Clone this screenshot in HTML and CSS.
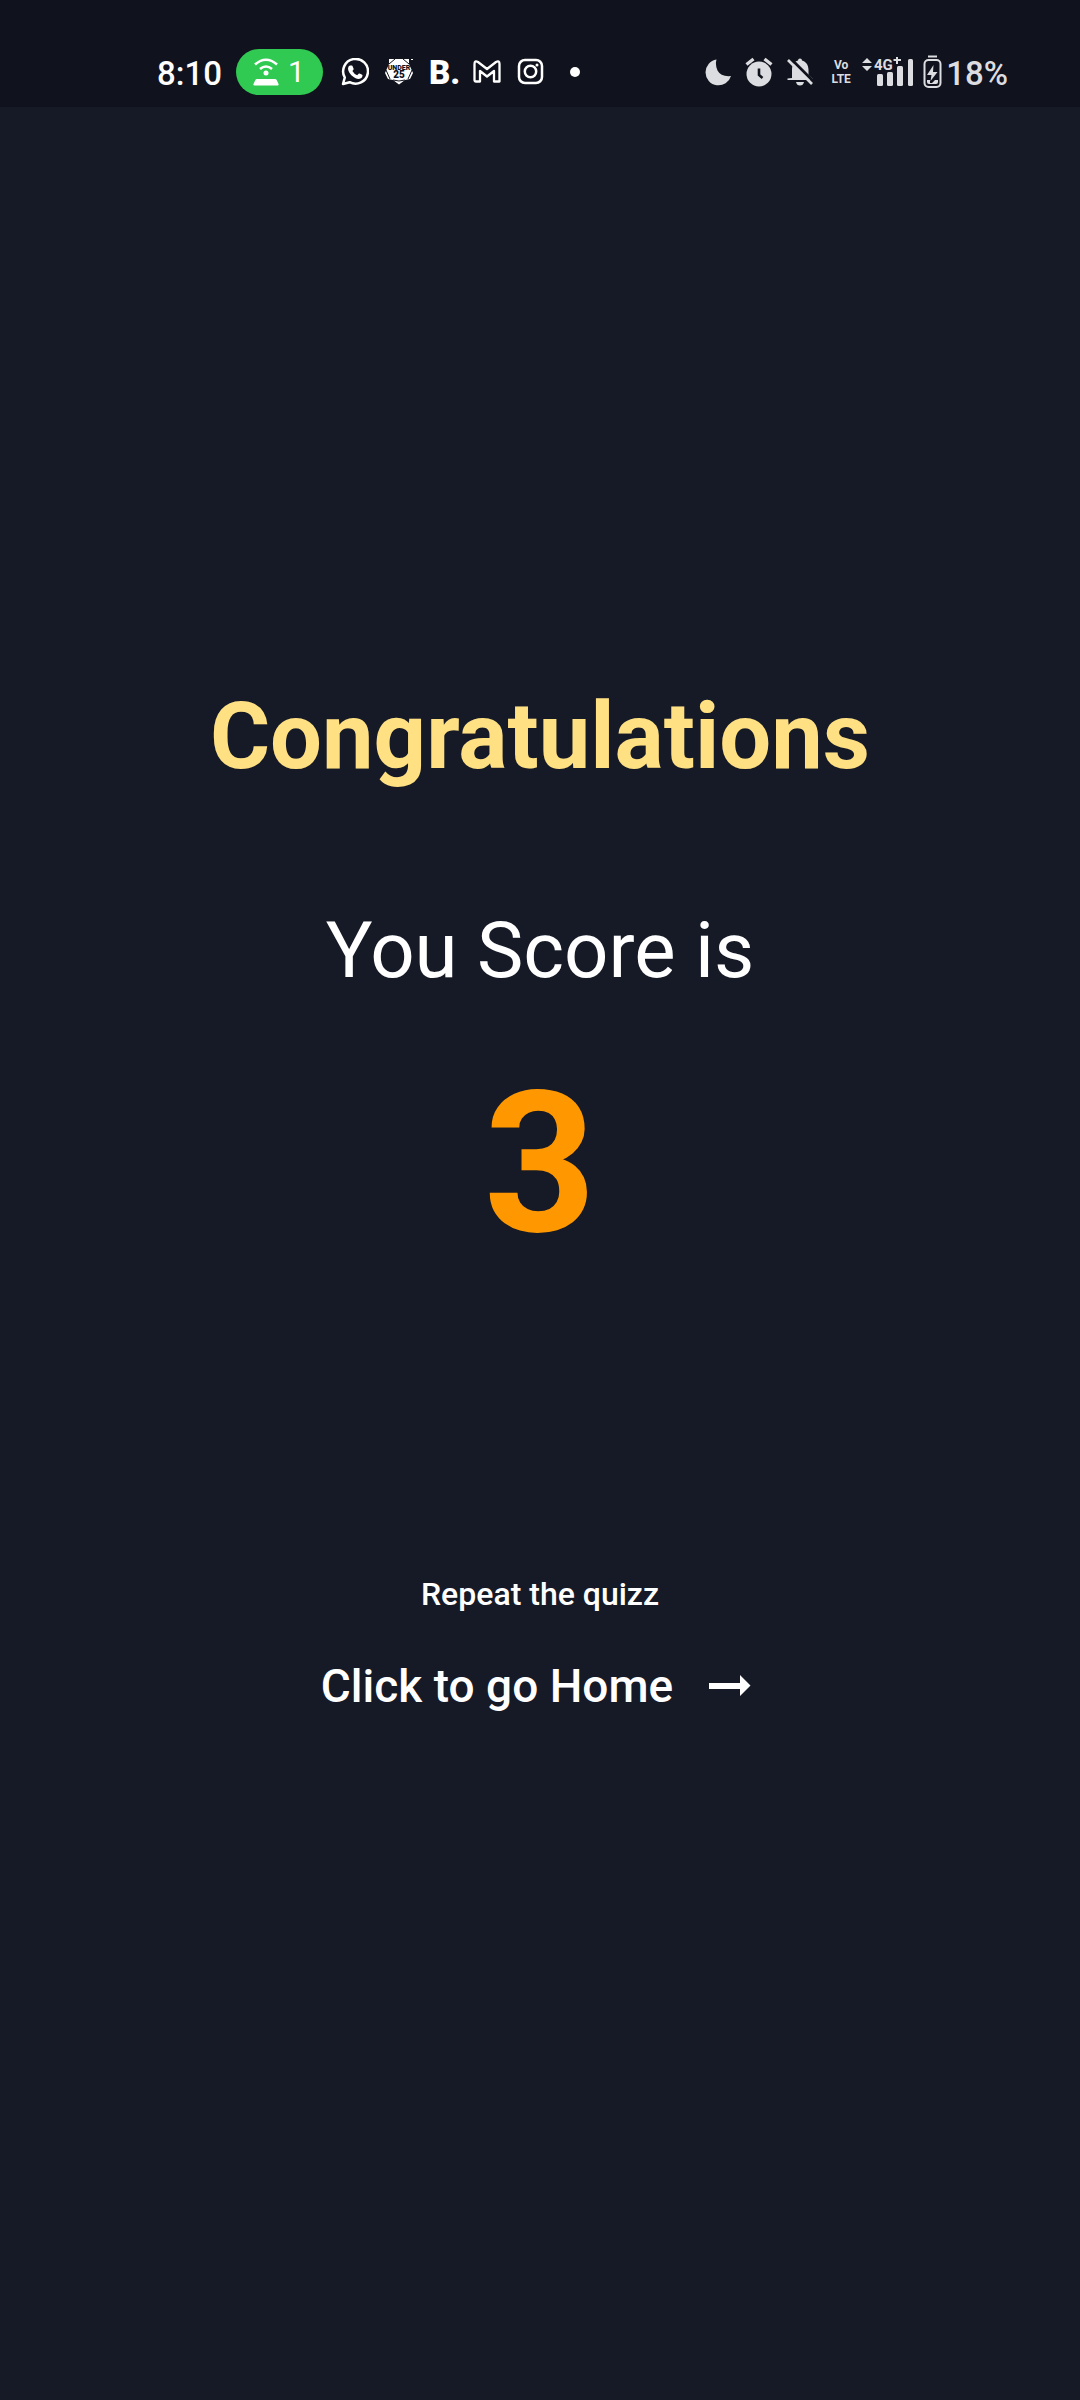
FILE: index.html
```html
<!DOCTYPE html>
<html lang="en">
<head>
<meta charset="utf-8">
<meta name="viewport" content="width=device-width, initial-scale=1">
<title>Quiz result</title>
<link rel="stylesheet" href="styles.css">
</head>
<body>
<header class="status">
  <div class="status-left">
    <span class="clock">8:10</span>
    <span class="hotspot">
      <svg width="28" height="28" viewBox="0 0 28 28" fill="none" stroke="#fff" stroke-width="2.6"><path d="M3 6.500Q14-3 25 6.500M8 11Q14 6 20 11"/><circle cx="14" cy="15" r="2.500" fill="#fff" stroke="none"/><path d="M5 21h18q1.200 0 1.700 1l1.800 4q.6 1.400-1 1.400h-23q-1.600 0-1-1.400l1.800-4q.5-1 1.700-1z" fill="#fff" stroke="none"/></svg>
      <span>1</span>
    </span>
    <div class="notices">
      <svg width="28" height="28" viewBox="0 0 28 28"><path d="M2 26l1.800-6.500A12.400 12.400 0 1 1 8.600 24.200z" fill="none" stroke="#fff" stroke-width="2.500" stroke-linejoin="round"/><path d="M9.600 7.500l1.300.1q.5.1.7.7l1 2.400q.2.500-.2 1l-1 1.300q1.700 3 4.800 4.300l1.400-1.600q.4-.4 1-.2l2.500 1.300q.5.200.4.800-.4 3.200-3.600 3.400C13 21 7 15 7 10.500q.2-2.200 1.800-2.900z" fill="#fff"/></svg>
      <svg width="28" height="28" viewBox="0 0 28 28"><path d="M4 1h20v5l4 9-3 6-5 1-6 4.500L8 22l-5-1-3-6 4-9z" fill="#fff"/><path d="M4 6l6-5M24 6l-6-5M1 12l4 9M27 12l-4 9M8 22q6 2 12 0" fill="none" stroke="#10121d"/><path d="M26 1.500h2" stroke="#fff"/><text x="14" y="12" class="badge-small">UNDER</text><text x="14" y="20" class="badge-big">25</text></svg>
      <span class="letter-b">B.</span>
      <svg width="28" height="28" viewBox="0 0 28 28"><path d="M1.500 6Q1.500 2 5 4l9 7 9-7q3.500-2 3.500 2V23.500H21V13l-7 5.500L7 13v10.500H3q-1.500 0-1.500-1.500z" fill="none" stroke="#fff" stroke-width="2.300" stroke-linejoin="round"/></svg>
      <svg width="28" height="28" viewBox="0 0 28 28" fill="none" stroke="#fff" stroke-width="2.500"><rect x="2" y="2" width="23" height="23" rx="6"/><circle cx="13.500" cy="13.500" r="5.700"/><circle cx="20" cy="7" r="1.500" fill="#fff" stroke="none"/></svg>
      <svg width="28" height="28" viewBox="0 0 28 28"><circle cx="14" cy="14" r="5" fill="#fff"/></svg>
    </div>
  </div>
  <div class="status-right">
    <div class="modes">
      <svg width="28" height="28" viewBox="0 0 28 28"><path d="M12.500 1.500A13 13 0 1 0 27 18Q17 19 13.500 12.500 11 7 12.500 1.500z" fill="currentColor"/></svg>
      <svg width="28" height="32" viewBox="0 0 28 32"><circle cx="14" cy="18" r="12.500" fill="currentColor"/><path d="M1.500 8.500l7-5.500M26.500 8.500l-7-5.500" stroke="currentColor" stroke-width="3.300"/><path d="M14 12.500v6.500l3.500 3" fill="none" stroke="#10121d" stroke-width="2.600"/></svg>
      <svg width="28" height="28" viewBox="0 0 28 28"><path d="M6 20V12C6 6 8.500 3.500 12 2.500q0-2 2-2t2 2C20 3.500 22.500 7 22.500 12v5l4 3.500V22H1.500v-1.500zM10 24h8q-.8 3.500-4 3.500T10 24z" fill="currentColor"/><path d="M4 0l24 24" stroke="#10121d" stroke-width="3"/><path d="M2 2l24 24" stroke="currentColor" stroke-width="2.600"/></svg>
      <span class="volte"><span>Vo</span><span>LTE</span></span>
    </div>
    <svg class="signal" width="52" height="34" viewBox="0 0 52 34" fill="currentColor"><path d="M0 8l5-5 5 5zM0 11h10l-5 5z"/><rect x="15" y="19" width="6" height="12" rx="1.500"/><rect x="25" y="17" width="6" height="14" rx="1.500"/><rect x="35" y="11" width="6" height="20" rx="1.500"/><rect x="46" y="4" width="5" height="27" rx="1.500"/><text x="12" y="15" class="network">4G</text><path d="M34 2h2v2h3v2h-3v3h-2V6h-2.500V4H34z"/></svg>
    <svg width="19" height="34" viewBox="0 0 19 34"><path d="M5 1.500h9" stroke="currentColor" stroke-width="2"/><rect x="1.500" y="5" width="16" height="27" rx="4" fill="none" stroke="currentColor" stroke-width="2"/><path d="M10.500 10L4 20h4.500L7.500 26 14.500 17H10z" fill="currentColor"/><path d="M4 25h3v3h2l3-3h3v2q0 2-2 2H6q-2 0-2-2z" fill="currentColor"/></svg>
    <span class="percent">18%</span>
  </div>
</header>
<main class="result">
  <h1 class="title">Congratulations</h1>
  <p class="label">You Score is</p>
  <p class="score">3</p>
  <button type="button" class="repeat">Repeat the quizz</button>
  <a href="#" class="home">Click to go Home
    <svg width="42" height="22" viewBox="0 0 42 22"><path d="M0 8h31V0l10.500 10.500L31 21v-7H0z" fill="currentColor"/></svg>
  </a>
</main>
</body>
</html>
```
FILE: styles.css
```css
* {
  box-sizing: border-box;
}

body {
  margin: 0;
  min-height: 100vh;
  background: #161a27;
  color: #fff;
  font-family: Roboto, sans-serif;
}

svg {
  display: block;
  flex: none;
}

.status {
  display: flex;
  justify-content: space-between;
  padding: 49px 72px 12px 157px;
  background: #10121d;
}

.status-left,
.status-right {
  display: flex;
  align-items: center;
  height: 46px;
}

.status-right {
  color: #dcdde0;
}

.clock,
.percent {
  padding-top: 3px;
  font-size: 33px;
  font-weight: 500;
  line-height: 40px;
}

.percent {
  margin-left: 4px;
}

.hotspot {
  display: flex;
  align-items: center;
  justify-content: space-between;
  width: 87px;
  height: 46px;
  margin: 0 18px 0 14px;
  padding: 0 18px 0 16px;
  border-radius: 23px;
  background: #30c952;
  font-size: 30px;
  line-height: 46px;
}

.notices {
  display: flex;
  align-items: center;
  gap: 16px;
}

.letter-b {
  width: 28px;
  padding-top: 2px;
  font-size: 33px;
  font-weight: 900;
  line-height: 40px;
}

.badge-small,
.badge-big {
  fill: #10121d;
  font-weight: 900;
  text-anchor: middle;
}

.badge-small {
  font-size: 7px;
}

.badge-big {
  font-size: 10px;
}

.modes {
  display: flex;
  align-items: center;
  gap: 13px;
}

.volte {
  display: flex;
  flex-direction: column;
  align-items: center;
  width: 28px;
  font-size: 12px;
  font-weight: 700;
  line-height: 14px;
}

.signal {
  margin: 0 9px 0 7px;
}

.network {
  font-size: 15px;
  font-weight: 700;
}

.result {
  display: flex;
  flex-direction: column;
  align-items: center;
  padding: 576px 24px 96px;
  text-align: center;
}

.title,
.label,
.score {
  margin: 0;
}

.title {
  color: #ffe082;
  font-size: 92px;
  font-weight: 700;
  line-height: 108px;
}

.label {
  margin-top: 114px;
  font-size: 78px;
  line-height: 92px;
}

.score {
  margin-top: 52px;
  color: #ff9800;
  font-size: 196px;
  font-weight: 700;
  line-height: 230px;
}

.repeat {
  margin-top: 296px;
  padding: 0;
  border: 0;
  background: none;
  color: inherit;
  font: 500 32px/38px Roboto, sans-serif;
}

.home {
  display: flex;
  align-items: center;
  gap: 36px;
  margin-top: 46px;
  padding-right: 8px;
  color: inherit;
  font-size: 46px;
  font-weight: 500;
  line-height: 54px;
  text-decoration: none;
}
```
